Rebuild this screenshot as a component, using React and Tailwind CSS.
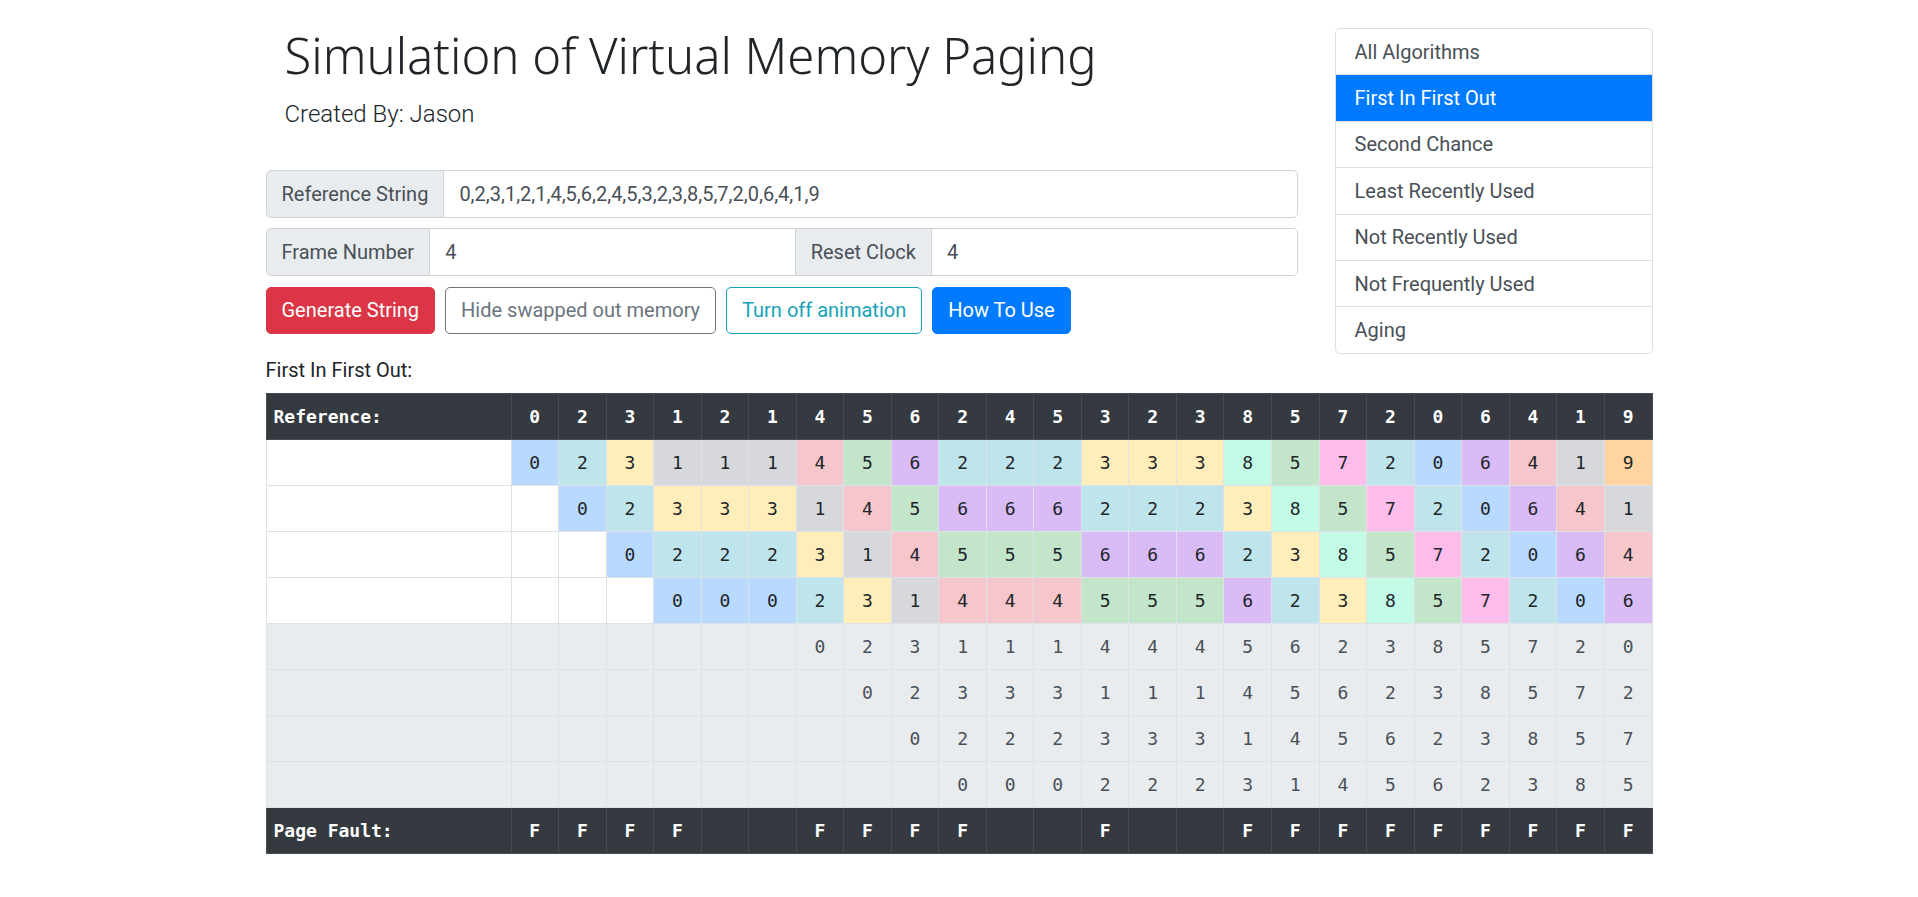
import React from 'react';

const refString = [0, 2, 3, 1, 2, 1, 4, 5, 6, 2, 4, 5, 3, 2, 3, 8, 5, 7, 2, 0, 6, 4, 1, 9];
const frameCount = 4;

const pageColors = {
  0: 'bg-[#b8daff]',
  1: 'bg-[#d6d8db]',
  2: 'bg-[#bee5eb]',
  3: 'bg-[#ffeeba]',
  4: 'bg-[#f5c6cb]',
  5: 'bg-[#c3e6cb]',
  6: 'bg-[#d9bbf5]',
  7: 'bg-[#fdbdeb]',
  8: 'bg-[#c3fce6]',
  9: 'bg-[#ffd4a1]',
};

const algorithms = [
  'All Algorithms',
  'First In First Out',
  'Second Chance',
  'Least Recently Used',
  'Not Recently Used',
  'Not Frequently Used',
  'Aging',
];

// run FIFO and keep a snapshot of every step
const simulateFifo = (refs, size) => {
  let frames = [];
  let swapped = [];
  return refs.map((page) => {
    let fault = false;
    if (!frames.includes(page)) {
      fault = true;
      if (frames.length === size) {
        const out = frames.pop();
        swapped = [out, ...swapped];
      }
      frames = [page, ...frames];
    }
    return { page, frames: [...frames], swapped: swapped.slice(0, size), fault };
  });
};

const sans = "font-['Segoe_UI',Roboto,'Noto_Sans',sans-serif]";

const App = () => {
  const steps = simulateFifo(refString, frameCount);
  const rows = Array.from({ length: frameCount }, (_, i) => i);

  return (
    <div className={`min-h-screen bg-white text-[#212529] ${sans}`}>
      <div className="mx-auto w-[1425px] px-[19px]">
        <div className="flex items-start gap-[37px]">
          {/* left column */}
          <div className="w-[1032px]">
            <div className="pl-[19px] pt-[26px]">
              <h1 className="font-['Noto_Sans',sans-serif] text-[49px] font-light leading-[1.2]">
                Simulation of Virtual Memory Paging
              </h1>
              <p className="mt-[15px] text-[24px] font-light leading-[1.2]">Created By: Jason</p>
            </div>

            <div className="mt-[41px] flex h-[48px] text-[20px] leading-[1.5]">
              <span className="flex items-center rounded-l-[5px] border border-[#ced4da] bg-[#e9ecef] px-[15px] text-[#495057]">
                Reference String
              </span>
              <div className="flex flex-1 items-center rounded-r-[5px] border border-l-0 border-[#ced4da] px-[15px] text-[#495057]">
                0,2,3,1,2,1,4,5,6,2,4,5,3,2,3,8,5,7,2,0,6,4,1,9
              </div>
            </div>

            <div className="mt-[10px] flex h-[48px] text-[20px] leading-[1.5]">
              <span className="flex items-center rounded-l-[5px] border border-[#ced4da] bg-[#e9ecef] px-[15px] text-[#495057]">
                Frame Number
              </span>
              <div className="flex flex-1 items-center border border-l-0 border-[#ced4da] px-[15px] text-[#495057]">4</div>
              <span className="flex items-center border border-l-0 border-[#ced4da] bg-[#e9ecef] px-[15px] text-[#495057]">
                Reset Clock
              </span>
              <div className="flex flex-1 items-center rounded-r-[5px] border border-l-0 border-[#ced4da] px-[15px] text-[#495057]">
                4
              </div>
            </div>

            <div className="mt-[11px] flex gap-[10px] text-[20px] leading-[1.5]">
              <button className="rounded-[5px] border border-[#dc3545] bg-[#dc3545] px-[15px] py-[7.5px] text-white">
                Generate String
              </button>
              <button className="rounded-[5px] border border-[#6c757d] bg-white px-[15px] py-[7.5px] text-[#6c757d]">
                Hide swapped out memory
              </button>
              <button className="rounded-[5px] border border-[#17a2b8] bg-white px-[15px] py-[7.5px] text-[#17a2b8]">
                Turn off animation
              </button>
              <button className="rounded-[5px] border border-[#007bff] bg-[#007bff] px-[15px] py-[7.5px] text-white">
                How To Use
              </button>
            </div>
          </div>

          {/* algorithm list */}
          <div className="mt-[28px] w-[318px] overflow-hidden rounded-[5px] border border-[#dfdfdf] text-[20px] leading-[1.5]">
            {algorithms.map((name, i) => (
              <div
                key={name}
                className={`px-[19px] py-[7.7px] ${i > 0 ? 'border-t border-[#dfdfdf]' : ''} ${
                  name === 'First In First Out' ? 'border-[#007bff] bg-[#007bff] text-white' : 'text-[#495057]'
                }`}
              >
                {name}
              </div>
            ))}
          </div>
        </div>

        <p className="mt-[1px] text-[20px] leading-[1.5]">First In First Out:</p>

        <table className="mt-[8px] w-full table-fixed border-collapse font-['DejaVu_Sans_Mono',monospace] text-[18px]">
          <colgroup>
            <col className="w-[245px]" />
            {steps.map((_, i) => (
              <col key={i} />
            ))}
          </colgroup>
          <thead>
            <tr className="h-[46px] bg-[#343a40] text-white">
              <th className="border border-[#454d55] px-[7px] text-left font-bold">Reference:</th>
              {steps.map((s, i) => (
                <th key={i} className="border border-[#454d55] text-center font-bold">
                  {s.page}
                </th>
              ))}
            </tr>
          </thead>
          <tbody>
            {rows.map((r) => (
              <tr key={`f${r}`} className="h-[46px]">
                <td className="border border-[#dee2e6] bg-white"></td>
                {steps.map((s, i) => {
                  const v = s.frames[r];
                  return (
                    <td
                      key={i}
                      className={`border border-[#dee2e6] text-center text-[#212529] ${
                        v === undefined ? 'bg-white' : pageColors[v]
                      }`}
                    >
                      {v}
                    </td>
                  );
                })}
              </tr>
            ))}
            {rows.map((r) => (
              <tr key={`s${r}`} className="h-[46px] bg-[#e9ecef]">
                <td className="border border-[#dee2e6]"></td>
                {steps.map((s, i) => (
                  <td key={i} className="border border-[#dee2e6] text-center text-[#495057]">
                    {s.swapped[r]}
                  </td>
                ))}
              </tr>
            ))}
            <tr className="h-[46px] bg-[#343a40] text-white">
              <td className="border border-[#454d55] px-[7px] text-left font-bold">Page Fault:</td>
              {steps.map((s, i) => (
                <td key={i} className="border border-[#454d55] text-center font-bold">
                  {s.fault ? 'F' : ''}
                </td>
              ))}
            </tr>
          </tbody>
        </table>
      </div>
    </div>
  );
};

export default App;
